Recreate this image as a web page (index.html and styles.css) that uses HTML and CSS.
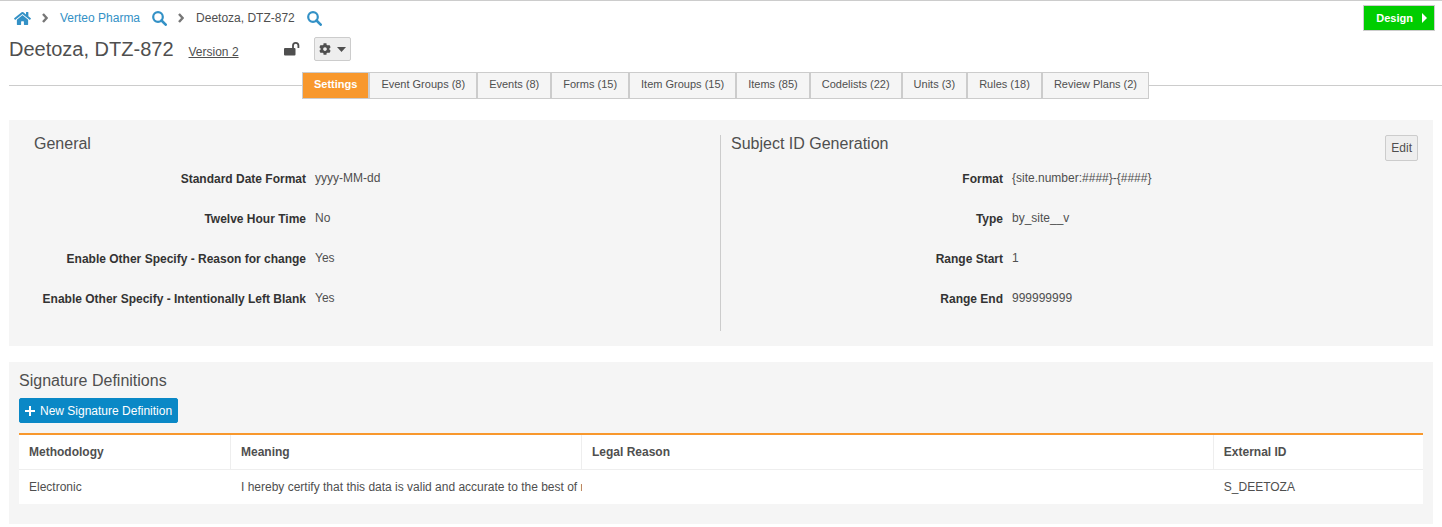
FILE: index.html
```html
<!DOCTYPE html>
<html lang="en">
<head>
    <meta charset="UTF-8">
    <meta name="viewport" content="width=device-width, initial-scale=1.0">
    <title>Deetoza, DTZ-872 - Settings</title>
    <link rel="stylesheet" href="styles.css">
</head>
<body>

<svg class="sprite" aria-hidden="true">
    <symbol id="search" viewBox="0 0 15 15">
        <circle cx="6" cy="6" r="4.8" fill="none" stroke="currentColor" stroke-width="2.2"/>
        <path d="M9.5 9.5l4.2 4.2" fill="none" stroke="currentColor" stroke-width="2.6" stroke-linecap="round"/>
    </symbol>
    <symbol id="chevron" viewBox="0 0 6 10">
        <path d="M1 1l3.6 4L1 9" fill="none" stroke="currentColor" stroke-width="2.4"/>
    </symbol>
</svg>

<header class="topbar">
    <nav class="breadcrumb" aria-label="Breadcrumb">
        <a href="#" class="home" aria-label="Home">
            <svg width="17" height="15" viewBox="0 0 576 512"><path fill="currentColor" d="M280.37 148.26L96 300.11V464a16 16 0 0 0 16 16l112.06-.29a16 16 0 0 0 15.92-16V368a16 16 0 0 1 16-16h64a16 16 0 0 1 16 16v95.64a16 16 0 0 0 16 16.05L464 480a16 16 0 0 0 16-16V300L295.67 148.26a12.19 12.19 0 0 0-15.3 0zM571.6 251.47L488 182.56V44.05a12 12 0 0 0-12-12h-56a12 12 0 0 0-12 12v72.61L318.47 43a48 48 0 0 0-61 0L4.34 251.47a12 12 0 0 0-1.6 16.9l25.5 31A12 12 0 0 0 45.15 301l235.22-193.74a12.19 12.19 0 0 1 15.3 0L530.9 301a12 12 0 0 0 16.9-1.6l25.5-31a12 12 0 0 0-1.7-16.93z"/></svg>
        </a>
        <svg class="chevron" width="6" height="10"><use href="#chevron"/></svg>
        <a href="#">Verteo Pharma</a>
        <a href="#" class="search" aria-label="Search studies"><svg width="15" height="15"><use href="#search"/></svg></a>
        <svg class="chevron" width="6" height="10"><use href="#chevron"/></svg>
        <span>Deetoza, DTZ-872</span>
        <a href="#" class="search" aria-label="Search versions"><svg width="15" height="15"><use href="#search"/></svg></a>
    </nav>
    <button type="button" class="design-btn">Design
        <svg width="5" height="10" viewBox="0 0 5 10"><path fill="currentColor" d="M0 0l5 5-5 5z"/></svg>
    </button>
</header>

<div class="title-row">
    <div class="title">
        <h1>Deetoza, DTZ-872</h1>
        <a href="#" class="version">Version 2</a>
    </div>
    <svg class="lock" width="16" height="16" viewBox="0 0 16 16">
        <path d="M9 8V4.500a2.700 2.700 0 0 1 5.400 0V7" fill="none" stroke="currentColor" stroke-width="1.800"/>
        <rect x="0" y="7" width="11.500" height="7.500" rx="1" fill="currentColor"/>
    </svg>
    <button type="button" class="gear-btn" aria-label="Actions">
        <svg width="12" height="12" viewBox="0 0 512 512"><path fill="currentColor" d="M487.4 315.7l-42.6-24.6c4.3-23.2 4.3-47 0-70.2l42.6-24.6c4.9-2.8 7.1-8.6 5.5-14-11.1-35.6-30-67.8-54.7-94.6-3.8-4.1-10-5.1-14.8-2.3L380.8 110c-17.9-15.4-38.5-27.3-60.8-35.1V25.8c0-5.6-3.9-10.5-9.4-11.7-36.7-8.2-74.300-7.800-109.200 0-5.500 1.200-9.400 6.100-9.400 11.700V75c-22.200 7.900-42.800 19.800-60.800 35.100L88.700 85.500c-4.900-2.800-11-1.900-14.800 2.300-24.700 26.700-43.600 58.900-54.700 94.600-1.700 5.400.6 11.200 5.500 14L67.300 221c-4.300 23.200-4.300 47 0 70.200l-42.600 24.600c-4.900 2.800-7.100 8.600-5.500 14 11.100 35.600 30 67.800 54.700 94.600 3.800 4.100 10 5.100 14.800 2.300l42.600-24.600c17.900 15.400 38.500 27.300 60.800 35.100v49.200c0 5.600 3.900 10.500 9.400 11.700 36.700 8.200 74.300 7.800 109.200 0 5.500-1.200 9.400-6.100 9.400-11.700v-49.200c22.200-7.900 42.800-19.800 60.800-35.100l42.600 24.600c4.900 2.800 11 1.900 14.800-2.300 24.700-26.700 43.600-58.900 54.700-94.600 1.500-5.500-.7-11.300-5.600-14.100zM256 336c-44.100 0-80-35.900-80-80s35.900-80 80-80 80 35.900 80 80-35.900 80-80 80z"/></svg>
        <svg width="9" height="5" viewBox="0 0 9 5"><path fill="currentColor" d="M0 0h9L4.500 5z"/></svg>
    </button>
</div>

<nav class="tabs">
    <a href="#" class="tab active">Settings</a>
    <a href="#" class="tab">Event Groups (8)</a>
    <a href="#" class="tab">Events (8)</a>
    <a href="#" class="tab">Forms (15)</a>
    <a href="#" class="tab">Item Groups (15)</a>
    <a href="#" class="tab">Items (85)</a>
    <a href="#" class="tab">Codelists (22)</a>
    <a href="#" class="tab">Units (3)</a>
    <a href="#" class="tab">Rules (18)</a>
    <a href="#" class="tab">Review Plans (2)</a>
</nav>

<section class="panel settings">
    <div class="column">
        <div class="column-head">
            <h2>General</h2>
        </div>
        <dl class="fields">
            <dt>Standard Date Format</dt><dd>yyyy-MM-dd</dd>
            <dt>Twelve Hour Time</dt><dd>No</dd>
            <dt>Enable Other Specify - Reason for change</dt><dd>Yes</dd>
            <dt>Enable Other Specify - Intentionally Left Blank</dt><dd>Yes</dd>
        </dl>
    </div>
    <div class="column">
        <div class="column-head">
            <h2>Subject ID Generation</h2>
            <button type="button" class="edit-btn">Edit</button>
        </div>
        <dl class="fields">
            <dt>Format</dt><dd>{site.number:####}-{####}</dd>
            <dt>Type</dt><dd>by_site__v</dd>
            <dt>Range Start</dt><dd>1</dd>
            <dt>Range End</dt><dd>999999999</dd>
        </dl>
    </div>
</section>

<section class="panel signatures">
    <h2>Signature Definitions</h2>
    <button type="button" class="new-btn">
        <svg width="10" height="10" viewBox="0 0 10 10"><path d="M5 0v10M0 5h10" stroke="currentColor" stroke-width="2"/></svg>
        New Signature Definition
    </button>
    <table>
        <thead>
            <tr>
                <th class="methodology">Methodology</th>
                <th class="meaning">Meaning</th>
                <th class="reason">Legal Reason</th>
                <th>External ID</th>
            </tr>
        </thead>
        <tbody>
            <tr>
                <td>Electronic</td>
                <td>I hereby certify that this data is valid and accurate to the best of m</td>
                <td></td>
                <td>S_DEETOZA</td>
            </tr>
        </tbody>
    </table>
</section>

</body>
</html>
```

FILE: styles.css
```css
* {
    box-sizing: border-box;
}
body {
    margin: 0;
    padding: 0 9px;
    border-top: 1px solid #ccc;
    background-color: #fff;
    color: #4f4f4f;
    font-family: "Liberation Sans", Arial, sans-serif;
    font-size: 12px;
    line-height: 16px;
}
a {
    color: #3391c6;
    text-decoration: none;
}
svg {
    display: block;
    flex: none;
}
h1, h2 {
    margin: 0;
    font-weight: normal;
}
h1 {
    font-size: 20px;
    line-height: 24px;
}
h2 {
    font-size: 16px;
    line-height: 18px;
}
button {
    display: flex;
    align-items: center;
    border: 1px solid #ccc;
    border-radius: 2px;
    background-color: #eee;
    color: #4f4f4f;
    font-family: inherit;
    font-size: 12px;
    line-height: 16px;
    cursor: pointer;
}
.sprite {
    display: none;
}

/* Breadcrumb */
.topbar {
    display: flex;
    justify-content: space-between;
    align-items: center;
    height: 34px;
    margin-right: -2px;
}
.breadcrumb {
    display: flex;
    align-items: center;
    padding-left: 5px;
}
.breadcrumb .chevron {
    margin: 0 12px 0 11px;
    color: #777;
}
.breadcrumb .search {
    margin-left: 12px;
}
.design-btn {
    gap: 9px;
    height: 26px;
    padding: 0 7px 0 12px;
    border-radius: 0;
    background-color: #00cd00;
    color: #fff;
    font-size: 11px;
    font-weight: bold;
}

/* Title */
.title-row {
    display: flex;
    align-items: center;
    height: 28px;
}
.title {
    display: flex;
    align-items: baseline;
    gap: 15px;
}
.version {
    color: #4f4f4f;
    text-decoration: underline;
}
.lock {
    margin-left: 45px;
}
.gear-btn {
    gap: 6px;
    height: 24px;
    margin-left: 14px;
    padding: 0 4px;
}

/* Tabs, with the rule running out on both sides */
.tabs {
    display: flex;
    align-items: flex-start;
    margin: 9px -9px 21px 0;
}
.tabs::before,
.tabs::after {
    content: "";
    flex: 1;
    height: 13px;
    border-bottom: 1px solid #ccc;
}
.tab {
    height: 27px;
    padding: 0 11px;
    border: 1px solid #ccc;
    background-color: #f5f5f5;
    color: #4f4f4f;
    font-size: 11px;
    line-height: 23px;
    white-space: nowrap;
}
.tab.active {
    background-color: #f8982d;
    color: #fff;
    font-weight: bold;
}

/* Panels */
.panel {
    margin-bottom: 16px;
    background-color: #f5f5f5;
}
.settings {
    display: grid;
    grid-template-columns: 1fr 1fr;
    padding: 15px;
}
.column {
    padding-left: 10px;
}
.column:first-child {
    border-right: 1px solid #ccc;
}
.column-head {
    display: flex;
    justify-content: space-between;
    align-items: flex-start;
    height: 26px;
}
.edit-btn {
    height: 26px;
    padding: 0 5px;
}
.fields {
    display: grid;
    grid-template-columns: 272px 1fr;
    grid-auto-rows: 40px;
    column-gap: 9px;
    margin: 9px 0 1px;
}
.fields dt {
    padding-top: 1px;
    color: #333;
    font-weight: bold;
    text-align: right;
    white-space: nowrap;
}
.fields dd {
    margin: 0;
}

/* Signature definitions */
.signatures {
    margin-bottom: 0;
    padding: 10px 10px 20px;
}
.new-btn {
    gap: 5px;
    height: 25px;
    margin: 8px 0 10px;
    padding: 0 5px;
    border-color: #0a88c6;
    background-color: #0a88c6;
    color: #fff;
}
table {
    width: 100%;
    border-top: 2px solid #f8982d;
    border-spacing: 0;
    background-color: #fff;
    table-layout: fixed;
}
th, td {
    height: 34px;
    padding: 0 0 0 10px;
    overflow: hidden;
    text-align: left;
    white-space: nowrap;
}
th {
    height: 35px;
    border-right: 1px solid #eee;
    border-bottom: 1px solid #eee;
}
th:last-child {
    border-right: 0;
}
.methodology {
    width: 212px;
}
.meaning {
    width: 25%;
}
.reason {
    width: 45%;
}
```
